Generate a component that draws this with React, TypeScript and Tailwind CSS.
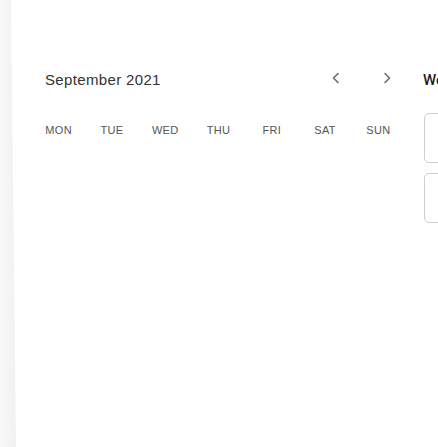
import React from "react";

const days = ["MON", "TUE", "WED", "THU", "FRI", "SAT", "SUN"];

function Chevron({ dir }: { dir: "left" | "right" }) {
  return (
    <svg width="10" height="12" viewBox="0 0 10 12" fill="none">
      <path
        d={dir === "left" ? "M7 1.5 L2.5 6 L7 10.5" : "M3 1.5 L7.5 6 L3 10.5"}
        stroke="#6b6b6b"
        strokeWidth="1.6"
        strokeLinecap="round"
        strokeLinejoin="round"
      />
    </svg>
  );
}

export default function App() {
  return (
    <div
      className="w-[438px] h-[447px] bg-white flex overflow-hidden"
      style={{ fontFamily: '"Liberation Sans", Arial, sans-serif' }}
    >
      <div className="w-[16px] h-full shrink-0 bg-gradient-to-r from-[#f8f8f8] to-[#f1f1f1] [clip-path:polygon(0_0,11px_0,16px_100%,0_100%)]" />
      <div className="w-[396px] shrink-0 flex flex-col">
        <div className="mt-[63px] h-[30px] flex items-start pl-[29px] pr-[10px]">
          <div className="mt-[7px] text-[15px] leading-[20px] tracking-[0.35px] text-[#333333]">
            September 2021
          </div>
          <div className="flex-1" />
          <div className="flex gap-[21px]">
            <button className="w-[30px] h-[30px] flex items-center justify-center rounded-full">
              <Chevron dir="left" />
            </button>
            <button className="w-[30px] h-[30px] flex items-center justify-center rounded-full">
              <Chevron dir="right" />
            </button>
          </div>
        </div>
        <div className="mt-[29px] ml-[16px] w-[373px] grid grid-cols-7">
          {days.map((d) => (
            <div
              key={d}
              className="text-center text-[11px] leading-[16px] tracking-[0.3px] text-[#555555]"
            >
              {d}
            </div>
          ))}
        </div>
      </div>
      <div className="w-[200px] shrink-0 flex flex-col pl-[11px]">
        <div className="mt-[70px] text-[15px] leading-[20px] font-medium text-[#1f1f1f] font-[Roboto,sans-serif] whitespace-nowrap">
          Week
        </div>
        <div className="mt-[23px] ml-[1px] h-[50px] rounded-[5px] border border-[#cfcfcf]" />
        <div className="mt-[10px] ml-[1px] h-[50px] rounded-[5px] border border-[#cfcfcf]" />
      </div>
    </div>
  );
}
